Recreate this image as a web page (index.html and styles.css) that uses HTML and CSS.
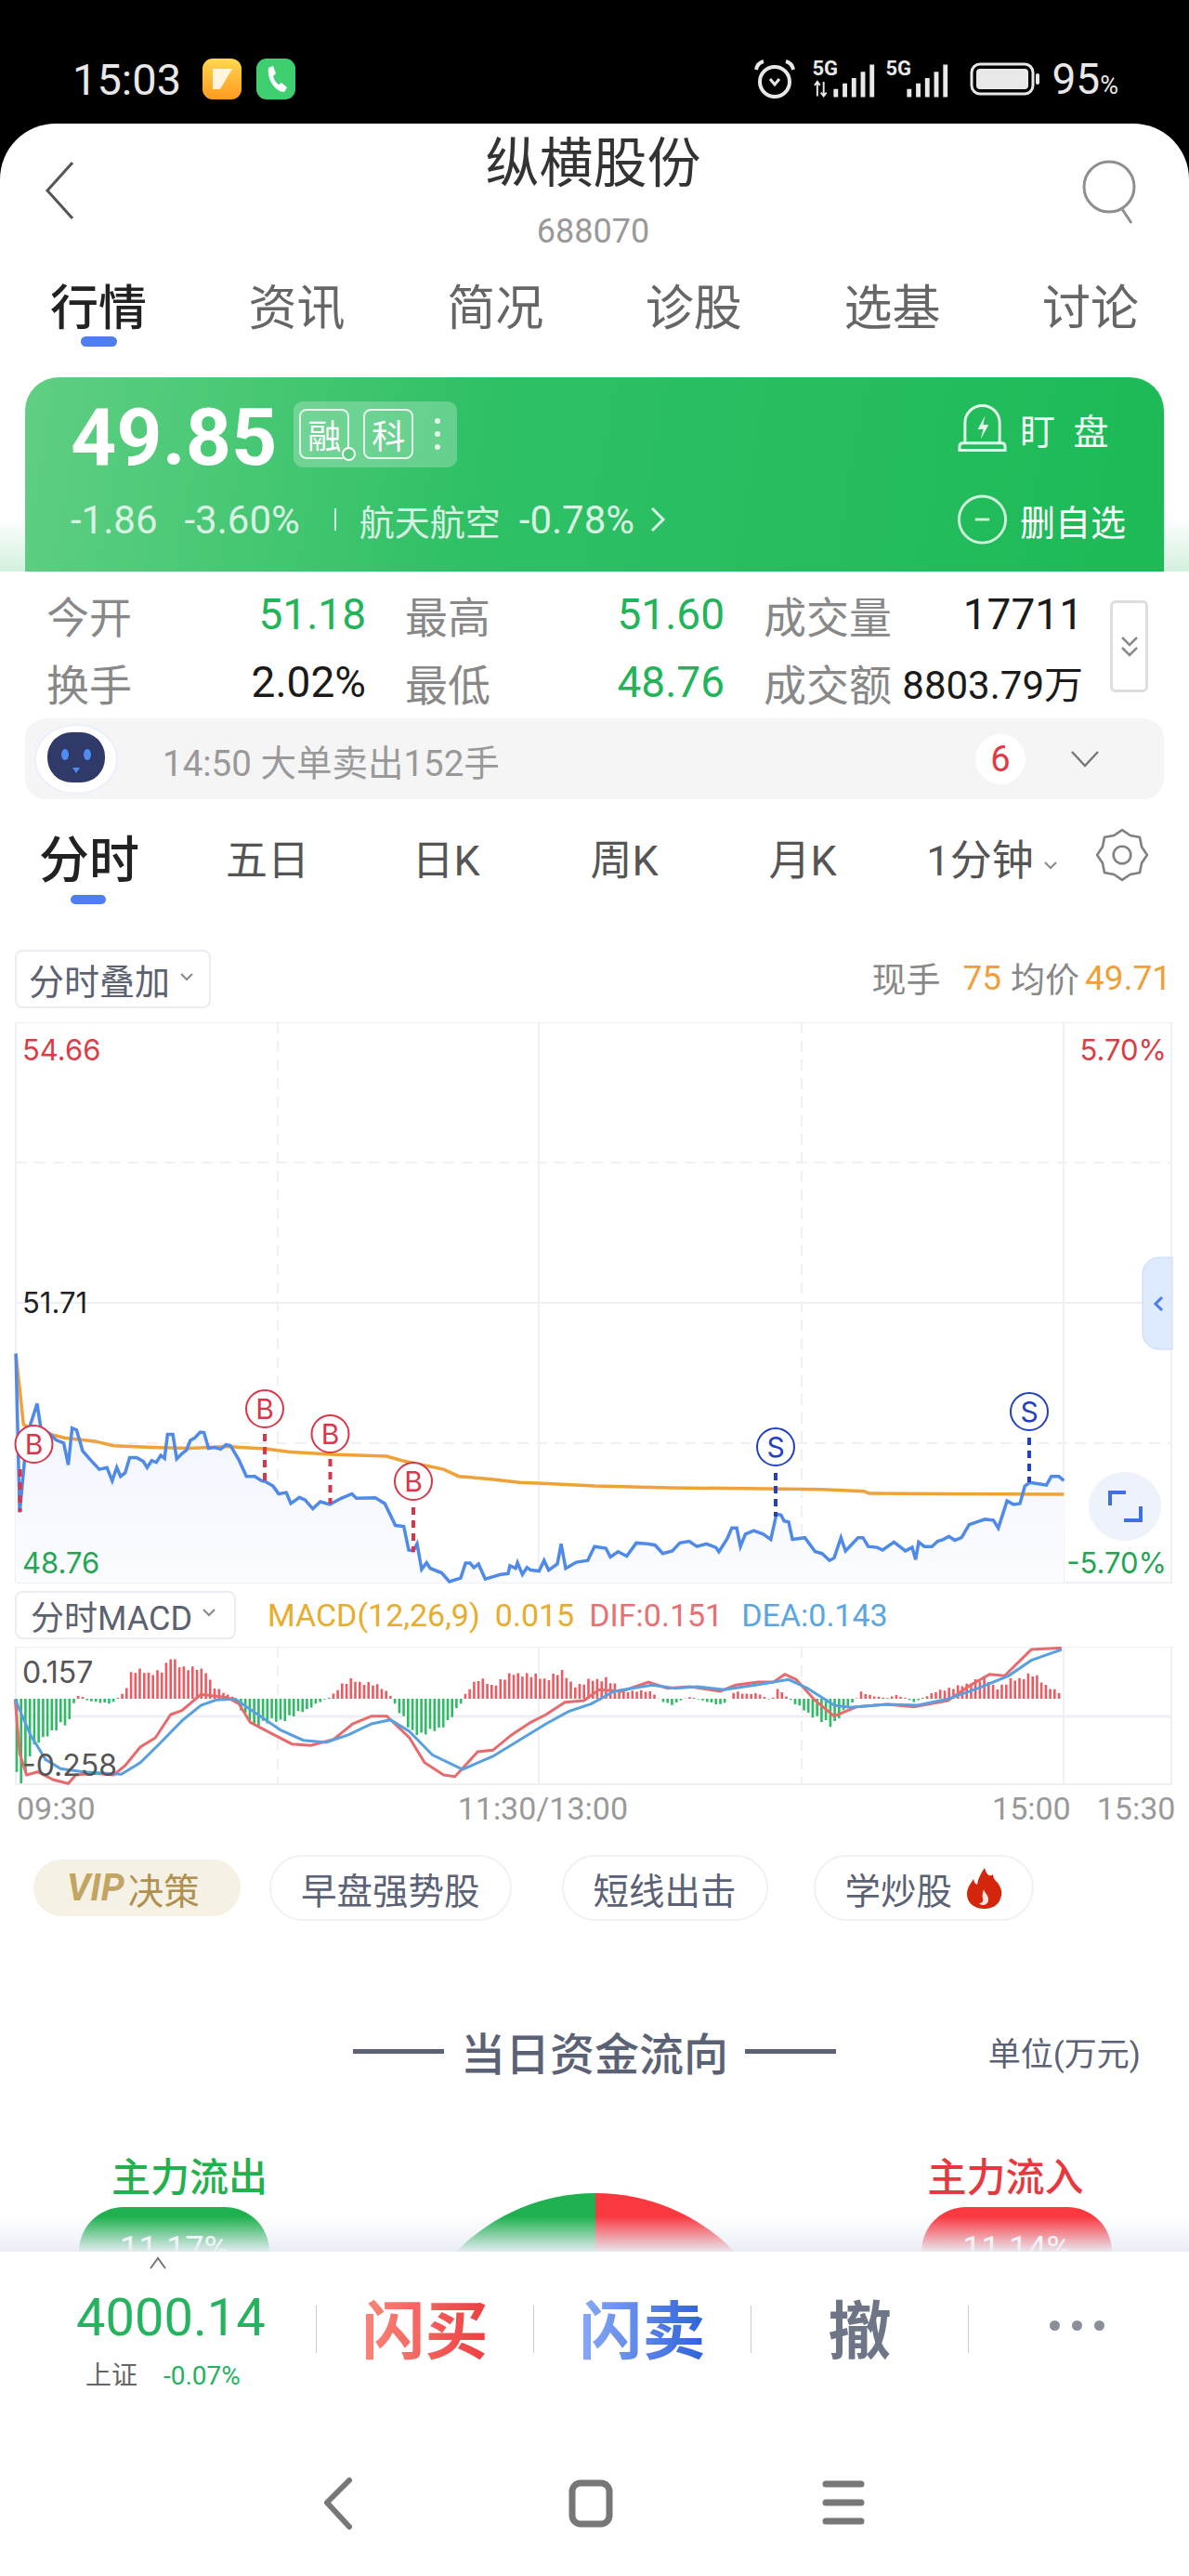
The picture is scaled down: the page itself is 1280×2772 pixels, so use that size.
FILE: index.html
```html
<!DOCTYPE html>
<html lang="zh">
    <head>
        <meta charset="utf-8">
        <title>纵横股份</title>
        <link rel="stylesheet" href="styles.css">
    </head>
    <body>
        <div class="status">
            <span class="clock">15:03</span>
            <svg class="app-icon" viewBox="0 0 42 44"><defs><linearGradient id="noteFill" x1="0" y1="0" x2="0" y2="1"><stop offset="0" stop-color="#ffd84f"/><stop offset="1" stop-color="#ff9a1f"/></linearGradient></defs><rect width="42" height="44" rx="11" fill="url(#noteFill)"/><path d="M11 11h21L19 33h-8z" fill="#fff" opacity=".85"/></svg>
            <svg class="app-icon" viewBox="0 0 42 44"><rect width="42" height="44" rx="11" fill="#3fcf70"/><path d="M13 10l5-2 3 8-3 3c1 4 3 7 6 9l3-2 6 5-3 5c-9 0-19-13-17-26z" fill="#fff"/></svg>
            <div class="status-right">
                <svg class="alarm" viewBox="0 0 46 44" fill="none" stroke="#e8e8e8" stroke-width="4"><circle cx="23" cy="25" r="16"/><path d="M3 12c1-5 4-8 8-9M43 12c-1-5-4-8-8-9"/><path d="M18 22l5 6 5-6" stroke-width="3"/></svg>
                <div class="net">
                    <span class="five-g">5G</span>
                    <svg class="signal" viewBox="0 0 74 42"><path d="M5 24v16M2 28l3-4 3 4M12 40V24M9 36l3 4 3-4" stroke="#e8e8e8" stroke-width="2" fill="none"/><path d="M23 32h5v9h-5zM33 26h5v15h-5zM43 20h5v21h-5zM53 13h5v28h-5zM63 5h5v36h-5z" fill="#e8e8e8"/></svg>
                </div>
                <div class="net">
                    <span class="five-g">5G</span>
                    <svg class="signal" viewBox="0 0 74 42"><path d="M23 32h5v9h-5zM33 26h5v15h-5zM43 20h5v21h-5zM53 13h5v28h-5zM63 5h5v36h-5z" fill="#e8e8e8"/></svg>
                </div>
                <svg class="battery" viewBox="0 0 76 36"><rect x="2" y="2" width="66" height="32" rx="9" fill="none" stroke="#e8e8e8" stroke-width="3"/><rect x="7" y="7" width="56" height="22" rx="4" fill="#e8e8e8"/><rect x="71" y="12" width="4" height="12" rx="2" fill="#e8e8e8"/></svg>
                <span class="level">95<small>%</small></span>
            </div>
        </div>

        <div class="app">
            <div class="main">
                <div class="head">
                    <svg class="back" viewBox="0 0 32 64" fill="none" stroke="#555" stroke-width="3"><path d="M30 2L3 32l27 30"/></svg>
                    <div class="head-title">
                        <div class="name">纵横股份</div>
                        <div class="code">688070</div>
                    </div>
                    <svg class="search" viewBox="0 0 60 70" fill="none" stroke="#8f8f8f" stroke-width="3"><circle cx="30" cy="30" r="27"/><path d="M44 54l10 15"/></svg>
                </div>

                <div class="tabs">
                    <span class="tab active">行情</span>
                    <span class="tab">资讯</span>
                    <span class="tab">简况</span>
                    <span class="tab">诊股</span>
                    <span class="tab">选基</span>
                    <span class="tab">讨论</span>
                </div>

                <div class="quote-wrap">
                    <div class="quote">
                        <div class="quote-left">
                            <div class="quote-top">
                                <span class="price">49.85</span>
                                <div class="tags">
                                    <span class="tag tag-rong">融<i class="tick"></i></span>
                                    <span class="tag">科</span>
                                    <span class="more"><i></i><i></i><i></i></span>
                                </div>
                            </div>
                            <div class="quote-sub">
                                <span>-1.86</span>
                                <span class="pct">-3.60%</span>
                                <i class="sub-line"></i>
                                <span class="sector">航天航空</span>
                                <span class="sector-pct">-0.78%</span>
                                <svg class="sub-arrow" viewBox="0 0 18 30" fill="none" stroke="#d8f3e2" stroke-width="3"><path d="M3 3l12 12L3 27"/></svg>
                            </div>
                        </div>
                        <div class="quote-right">
                            <div class="act act-top">
                                <svg class="act-icon" viewBox="0 0 56 52" fill="none" stroke="#e3f7ea" stroke-width="3"><path d="M9 42V20a19 19 0 0 1 38 0v22"/><path d="M3 50v-4q0-4 4-4h42q4 0 4 4v4z"/><path d="M31 12l-8 15h6l-3 11 9-16h-6z" fill="#e3f7ea" stroke="none"/></svg>
                                <span>盯 盘</span>
                            </div>
                            <div class="act">
                                <svg class="act-icon" viewBox="0 0 56 56" fill="none" stroke="#d2f2de" stroke-width="3"><circle cx="28" cy="28" r="26"/><path d="M20 28h16"/></svg>
                                <span>删自选</span>
                            </div>
                        </div>
                    </div>
                </div>

                <div class="stats-wrap">
                    <div class="stats">
                        <div class="stat"><span class="key">今开</span><span class="down">51.18</span></div>
                        <div class="stat"><span class="key">最高</span><span class="down">51.60</span></div>
                        <div class="stat"><span class="key">成交量</span><span class="plain">17711</span></div>
                        <div class="stat"><span class="key">换手</span><span class="plain">2.02%</span></div>
                        <div class="stat"><span class="key">最低</span><span class="down">48.76</span></div>
                        <div class="stat"><span class="key">成交额</span><span class="plain amount">8803.79万</span></div>
                    </div>
                    <div class="expand">
                        <svg viewBox="0 0 22 26" fill="none" stroke="#8b8b8b" stroke-width="2.5"><path d="M3 3l8 8 8-8M3 14l8 8 8-8"/></svg>
                    </div>
                </div>

                <div class="alert">
                    <svg class="robot" viewBox="0 0 90 76"><ellipse cx="45" cy="38" rx="44" ry="37" fill="#fff" stroke="#eaf1fb" stroke-width="2"/><rect x="14" y="9" width="62" height="54" rx="26" fill="#2f3a69"/><ellipse cx="33" cy="33" rx="4" ry="6" fill="#4f8df5"/><ellipse cx="57" cy="33" rx="4" ry="6" fill="#4f8df5"/><path d="M41 47h8l-4 6z" fill="#4f8df5"/></svg>
                    <span class="alert-text">14:50 大单卖出152手</span>
                    <span class="badge">6</span>
                    <svg class="alert-arrow" viewBox="0 0 32 20" fill="none" stroke="#777" stroke-width="2.5"><path d="M2 2l14 15L30 2"/></svg>
                </div>

                <div class="periods">
                    <span class="period active">分时</span>
                    <span class="period">五日</span>
                    <span class="period">日K</span>
                    <span class="period">周K</span>
                    <span class="period">月K</span>
                    <span class="period period-min">1分钟<svg class="caret-sm" viewBox="0 0 16 10" fill="none" stroke="#888" stroke-width="2"><path d="M2 2l6 6 6-6"/></svg></span>
                    <svg class="gear" viewBox="0 0 56 56" fill="none" stroke="#808080" stroke-width="2.5" stroke-linejoin="round"><polygon points="54,28 48.3,36.4 46.4,46.4 36.4,48.3 28,54 19.6,48.3 9.6,46.4 7.7,36.4 2,28 7.7,19.6 9.6,9.6 19.6,7.7 28,2 36.4,7.7 46.4,9.6 48.3,19.6"/><circle cx="28" cy="28" r="9"/></svg>
                </div>

                <div class="chart-head">
                    <div class="drop">分时叠加<svg class="caret-sm" viewBox="0 0 16 10" fill="none" stroke="#888" stroke-width="2"><path d="M2 2l6 6 6-6"/></svg></div>
                    <div class="now">
                        <span>现手</span><b class="now-hand">75</b><span>均价</span><b>49.71</b>
                    </div>
                </div>

                <svg id="priceChart" class="chart" viewBox="0 1100 1280 606">
                    <g class="grid-line">
                        <path d="M17 1100H1262M17 1402H1262M17 1703H1262M17 1100V1703M580 1100V1703M1145 1100V1703M1261 1100V1703"/>
                        <path class="dash" d="M17 1251H1262M17 1553H1262M299 1100V1703M863 1100V1703"/>
                    </g>
                    <g id="priceLines"></g>
                    <text x="24" y="1141" class="axis up">54.66</text>
                    <text x="24" y="1413" class="axis">51.71</text>
                    <text x="24" y="1693" class="axis down-t">48.76</text>
                    <text x="1256" y="1141" class="axis up end">5.70%</text>
                    <text x="1256" y="1693" class="axis down-t end">-5.70%</text>
                    <g class="buy">
                        <path d="M21.6 1581V1627M285 1543V1593M355.5 1570V1618M445 1622V1670"/>
                        <circle cx="36.5" cy="1554" r="20"/><text x="36.5" y="1565">B</text>
                        <circle cx="285" cy="1516" r="20"/><text x="285" y="1527">B</text>
                        <circle cx="355.5" cy="1543" r="20"/><text x="355.5" y="1554">B</text>
                        <circle cx="445" cy="1594" r="20"/><text x="445" y="1605">B</text>
                    </g>
                    <g class="sell">
                        <path d="M835 1585V1632M1108 1547V1595"/>
                        <circle cx="835" cy="1557" r="20"/><text x="835" y="1568">S</text>
                        <circle cx="1108" cy="1519" r="20"/><text x="1108" y="1530">S</text>
                    </g>
                    <path d="M1262 1353h-14a18 18 0 0 0-18 18v63a18 18 0 0 0 18 18h14z" fill="#deeafd" stroke="#c9daf5" stroke-width="1"/>
                    <path d="M1251 1396l-7 7 7 7" fill="none" stroke="#4a7df0" stroke-width="3"/>
                    <ellipse cx="1211" cy="1621" rx="39" ry="37" fill="#eef2fb"/>
                    <path d="M1195 1620v-14h17M1228 1621v15h-18" fill="none" stroke="#3f6fe0" stroke-width="4"/>
                </svg>

                <div class="macd-head">
                    <div class="drop drop-macd">分时MACD<svg class="caret-sm" viewBox="0 0 16 10" fill="none" stroke="#888" stroke-width="2"><path d="M2 2l6 6 6-6"/></svg></div>
                    <span class="m-gold">MACD(12,26,9)</span>
                    <span class="m-gold">0.015</span>
                    <span class="m-red">DIF:0.151</span>
                    <span class="m-blue">DEA:0.143</span>
                </div>

                <svg id="macdChart" class="macd" viewBox="0 1772 1280 150">
                    <g class="grid-line">
                        <path d="M17 1772H1262M17 1920H1262M17 1772V1920M580 1772V1920M1145 1772V1920M1261 1772V1920"/>
                        <path class="dash" d="M299 1772V1920M863 1772V1920"/>
                        <path class="zero" d="M17 1847H1262"/>
                    </g>
                    <g id="macdBars"></g>
                    <g id="macdLines"></g>
                    <text x="24" y="1811" class="axis macd-axis">0.157</text>
                    <text x="24" y="1911" class="axis macd-axis">-0.258</text>
                </svg>

                <div class="times">
                    <span>09:30</span>
                    <span class="time-mid">11:30/13:00</span>
                    <span class="time-end">15:00</span>
                    <span>15:30</span>
                </div>

                <div class="chips">
                    <span class="chip chip-vip"><b>VIP</b> 决策</span>
                    <span class="chip">早盘强势股</span>
                    <span class="chip">短线出击</span>
                    <span class="chip chip-learn">学炒股
                        <svg class="flame" viewBox="0 0 40 46"><path d="M21 1c2 8 6 10 9 7 0 4 2 6 5 9 5 7 5 12 3 17-2 7-9 11-17 11C10 45 2 39 2 29c0-7 4-11 7-16 1 4 2 5 4 6 1-7 4-12 8-18z" fill="#d4260c"/><path d="M20 24c1 4 5 6 5 11 0 4-3 6-6 6-2 0-3-1-4-2 3 0 5-2 4-5-1-3 0-6 1-10z" fill="#ffe6dc"/></svg>
                    </span>
                </div>

                <div class="money-head">
                    <div class="money-title"><i></i>当日资金流向<i></i></div>
                    <span class="unit">单位(万元)</span>
                </div>

                <div class="flow">
                    <div class="flow-col">
                        <div class="flow-key flow-out">主力流出</div>
                        <div class="pill pill-out">11.17%</div>
                    </div>
                    <div class="gauge"></div>
                    <div class="flow-col">
                        <div class="flow-key flow-in">主力流入</div>
                        <div class="pill pill-in">11.14%</div>
                    </div>
                </div>
                <div class="fade"></div>
            </div>

            <div class="bottom">
                <svg class="index-up" viewBox="0 0 20 16" fill="none" stroke="#777" stroke-width="2"><path d="M2 14l8-11 8 11"/></svg>
                <div class="trade">
                    <div class="index">
                        <div class="index-num">4000.14</div>
                        <div class="index-sub"><span class="index-name">上证</span><span>-0.07%</span></div>
                    </div>
                    <i class="sep"></i>
                    <span class="btn btn-buy">闪买</span>
                    <i class="sep"></i>
                    <span class="btn btn-sell">闪卖</span>
                    <i class="sep"></i>
                    <span class="btn btn-undo">撤</span>
                    <i class="sep"></i>
                    <span class="btn btn-more"><i></i><i></i><i></i></span>
                </div>
                <div class="nav">
                    <svg viewBox="0 0 80 60" fill="none" stroke="#777" stroke-width="6" stroke-linecap="round" stroke-linejoin="round"><path d="M52 5L28 29l24 26"/></svg>
                    <svg viewBox="0 0 80 60" fill="none" stroke="#777" stroke-width="7"><rect x="20" y="8" width="40" height="44" rx="9"/></svg>
                    <svg viewBox="0 0 80 60" fill="none" stroke="#777" stroke-width="7" stroke-linecap="round"><path d="M21 9h38M21 29h38M21 49h38"/></svg>
                </div>
            </div>
        </div>
        <script src="chart.js"></script>
    </body>
</html>
```

FILE: styles.css
```css
*{
    box-sizing: border-box;
}

body{
    margin: 0;
    width: 1280px;
    height: 2772px;
    overflow: hidden;
    background-color: #000;
    font-family: Roboto, "Noto Sans CJK SC", sans-serif;
    color: #222;
}

i{
    font-style: normal;
}

/* status bar */
.status{
    height: 133px;
    padding: 37px 76px 0 78px;
    display: flex;
    align-items: center;
    color: #e8e8e8;
}

.clock{
    font-size: 47px;
    margin-right: 23px;
}

.app-icon{
    width: 42px;
    height: 44px;
    margin-right: 16px;
}

.status-right{
    margin-left: auto;
    display: flex;
    align-items: center;
}

.alarm{
    width: 46px;
    height: 44px;
    margin-right: 18px;
}

.net{
    width: 72px;
    height: 42px;
    margin-right: 7px;
    position: relative;
}

.signal{
    display: block;
    width: 72px;
    height: 42px;
}

.five-g{
    position: absolute;
    left: 0;
    top: -2px;
    font-size: 22px;
    line-height: 24px;
    font-weight: 700;
}

.battery{
    width: 76px;
    height: 36px;
    margin: 0 13px 0 11px;
}

.level{
    font-size: 46px;
}

.level small{
    font-size: 27px;
}

/* white sheet */
.app{
    height: 2639px;
    background-color: #fff;
    border-radius: 60px 60px 0 0;
    display: flex;
    flex-direction: column;
    overflow: hidden;
}

.main{
    flex: 1;
    min-height: 0;
    overflow: hidden;
    position: relative;
}

.head{
    height: 152px;
    padding: 0 56px 0 48px;
    display: grid;
    grid-template-columns: 1fr auto 1fr;
    align-items: center;
}

.back{
    width: 32px;
    height: 64px;
    margin-top: -8px;
}

.search{
    width: 60px;
    height: 70px;
    margin-top: -6px;
    justify-self: end;
}

.head-title{
    text-align: center;
    margin: -13px 0 0 5px;
}

.name{
    font-size: 58px;
    line-height: 82px;
    color: #333;
}

.code{
    font-size: 36px;
    line-height: 44px;
    color: #999;
    margin-top: 10px;
}

.tabs{
    height: 90px;
    margin-bottom: 31px;
    padding: 3px 54px 0;
    display: flex;
    justify-content: space-between;
    font-size: 52px;
    line-height: 90px;
    color: #666;
}

.tab{
    position: relative;
}

.tab.active{
    color: #222;
    font-weight: 500;
}

.tab.active::after{
    content: "";
    position: absolute;
    left: 33px;
    top: 74px;
    width: 39px;
    height: 11px;
    border-radius: 6px;
    background-color: #4f7ef0;
}

/* green quote card */
.quote-wrap{
    padding: 0 27px;
    background: linear-gradient(#fff 72%, #d3f0dd 100%);
}

.quote{
    height: 209px;
    padding: 14px 41px 0 49px;
    display: flex;
    justify-content: space-between;
    border-radius: 36px 36px 0 0;
    background: linear-gradient(100deg, #60cf83 0%, #2fc066 40%, #1dba57 100%);
    color: #fff;
}

.quote-top{
    height: 100px;
    display: flex;
    align-items: center;
}

.price{
    font-size: 86px;
    font-weight: 700;
    margin-right: 18px;
}

.tags{
    width: 176px;
    height: 71px;
    margin-top: -6px;
    padding-left: 6px;
    display: flex;
    align-items: center;
    gap: 15px;
    border-radius: 10px;
    background-color: rgba(255,255,255,.25);
}

.tag{
    width: 54px;
    height: 54px;
    display: flex;
    align-items: center;
    justify-content: center;
    border: 2px solid rgba(255,255,255,.8);
    border-radius: 8px;
    font-size: 36px;
    position: relative;
}

.tick{
    position: absolute;
    right: -9px;
    bottom: -4px;
    width: 15px;
    height: 15px;
    border-radius: 50%;
    border: 2px solid #fff;
    background-color: #5fcc82;
}

.more{
    margin-left: 8px;
    display: flex;
    flex-direction: column;
    gap: 8px;
}

.more i{
    width: 6px;
    height: 6px;
    border-radius: 50%;
    background-color: #fff;
    opacity: .8;
}

.quote-sub{
    height: 60px;
    margin-top: 9px;
    display: flex;
    align-items: center;
    font-size: 42px;
    color: #d8f3e2;
}

.pct{
    margin-left: 29px;
}

.sub-line{
    width: 2px;
    height: 24px;
    margin: 0 25px 0 37px;
    background-color: #d8f3e2;
}

.sector{
    font-size: 38px;
}

.sector-pct{
    margin-left: 20px;
}

.sub-arrow{
    width: 18px;
    height: 30px;
    margin-left: 16px;
}

.quote-right{
    display: flex;
    flex-direction: column;
    font-size: 38px;
}

.act{
    height: 60px;
    margin-top: 27px;
    display: flex;
    align-items: center;
    gap: 13px;
}

.act-top{
    height: 82px;
    margin-top: 0;
    color: #f2fff6;
    word-spacing: 10px;
}

.act-icon{
    width: 55px;
    height: 54px;
}

/* stats */
.stats-wrap{
    height: 158px;
    padding: 9px 0 0 50px;
    display: flex;
}

.stats{
    width: 1116px;
    display: grid;
    grid-template-columns: 344px 344px 344px;
    grid-auto-rows: 73px;
    column-gap: 42px;
    font-size: 46px;
}

.stat{
    display: flex;
    align-items: center;
    justify-content: space-between;
}

.key{
    color: #888;
    font-size: 46px;
}

.down{
    color: #22b45a;
}

.plain{
    color: #1a1a1a;
    font-size: 46px;
}

.plain.amount{
    font-size: 42px;
}

.expand{
    width: 41px;
    height: 99px;
    margin: 22px 0 0 29px;
    display: flex;
    align-items: center;
    justify-content: center;
    border: 3px solid #dedede;
    border-radius: 6px;
}

.expand svg{
    width: 22px;
    height: 26px;
}

/* alert strip */
.alert{
    height: 87px;
    margin: 0 27px;
    padding: 0 69px 0 9px;
    display: flex;
    align-items: center;
    border-radius: 22px;
    background-color: #f5f5f5;
}

.robot{
    width: 92px;
    height: 76px;
    margin-right: 47px;
}

.alert-text{
    font-size: 38.5px;
    color: #999;
    padding-top: 2px;
}

.badge{
    width: 54px;
    height: 54px;
    margin-left: auto;
    display: flex;
    align-items: center;
    justify-content: center;
    border-radius: 50%;
    background-color: #fff;
    color: #e23a45;
    font-size: 38px;
}

.alert-arrow{
    width: 32px;
    height: 20px;
    margin-left: 48px;
}

/* period tabs */
.periods{
    height: 124px;
    margin-bottom: 38px;
    display: grid;
    grid-template-columns: repeat(6, 192px) 1fr;
    align-items: center;
    justify-items: center;
    font-size: 45px;
    color: #555;
}

.period{
    position: relative;
    white-space: nowrap;
}

.period.active{
    font-size: 54px;
    font-weight: 500;
    color: #222;
    margin-top: -2px;
}

.period.active::after{
    content: "";
    position: absolute;
    left: 34px;
    top: 81px;
    width: 38px;
    height: 10px;
    border-radius: 5px;
    background-color: #4f7ef0;
}

.period-min{
    margin-left: 24px;
}

.caret-sm{
    width: 16px;
    height: 10px;
    margin: 0 0 6px 10px;
}

.gear{
    width: 58px;
    height: 58px;
    margin: -4px 0 0 -16px;
}

/* chart */
.chart-head{
    height: 63px;
    margin: 0 19px 15px 16px;
    display: flex;
    align-items: center;
    justify-content: space-between;
}

.drop{
    height: 63px;
    padding: 0 16px 0 13px;
    display: flex;
    align-items: center;
    border: 2px solid #ebedf2;
    border-radius: 8px;
    font-size: 38px;
    color: #5c6270;
}

.now{
    display: flex;
    align-items: center;
    font-size: 37px;
    color: #888;
    margin-top: -3px;
}

.now b{
    font-weight: 400;
    color: #f0a038;
    margin-left: 6px;
}

.now .now-hand{
    margin: 0 10px 0 24px;
}

.chart{
    display: block;
    width: 1280px;
    height: 606px;
}

.grid-line{
    fill: none;
    stroke: #eef0f5;
    stroke-width: 2;
}

.dash{
    stroke-dasharray: 12 8;
}

.zero{
    stroke-width: 3;
}

.axis{
    font-family: Inter, sans-serif;
    font-size: 31px;
    fill: #222;
}

.axis.up{
    fill: #dc3c46;
}

.axis.down-t{
    fill: #22a654;
}

.axis.end{
    text-anchor: end;
}

.buy,
.sell{
    font-family: Inter, sans-serif;
    font-size: 30px;
    text-anchor: middle;
}

.buy path,
.sell path{
    stroke-width: 4;
    stroke-dasharray: 8 6;
    fill: none;
}

.buy circle,
.sell circle{
    fill: #fff;
    stroke-width: 2;
}

.buy path,
.buy circle{
    stroke: #d9364a;
}

.buy text{
    fill: #d9364a;
}

.sell path,
.sell circle{
    stroke: #2340c0;
}

.sell text{
    fill: #2340c0;
}

.macd-head{
    height: 52px;
    margin: 6px 0 8px 16px;
    display: flex;
    align-items: center;
    font-size: 34px;
}

.drop-macd{
    height: 52px;
    width: 238px;
    margin-right: 34px;
    font-size: 36px;
    padding: 0 8px 0 15px;
    white-space: nowrap;
}

.m-gold{
    color: #e8ad2c;
    margin-right: 16px;
}

.m-red{
    color: #e87073;
    margin-right: 20px;
}

.m-blue{
    color: #5aa6e0;
}

.macd{
    display: block;
    width: 1280px;
    height: 150px;
}

.macd-axis{
    font-size: 32px;
    fill: #555;
}

.times{
    height: 47px;
    padding: 0 18px;
    display: flex;
    align-items: center;
    font-size: 34px;
    color: #999;
}

.time-mid{
    margin-left: 390px;
}

.time-end{
    margin-left: 392px;
}

.times span:last-child{
    margin-left: 28px;
}

.chips{
    height: 71px;
    margin-top: 27px;
    padding-left: 36px;
    display: flex;
    align-items: center;
    font-size: 38.5px;
    color: #5b6275;
}

.chip{
    height: 71px;
    margin-left: 54px;
    padding: 0 32px;
    display: flex;
    align-items: center;
    border: 2px solid #eff1f7;
    border-radius: 36px;
    white-space: nowrap;
}

.chip-vip{
    width: 223px;
    height: 61px;
    margin: 0 -23px 0 0;
    padding: 0 0 0 36px;
    border: none;
    background-color: #f6f1e5;
    color: #b0904f;
}

.chip-vip b{
    font-style: italic;
    font-size: 40px;
    margin-right: 4px;
    color: #c2a562;
}

.chip-learn{
    margin-left: 49px;
}

.flame{
    width: 40px;
    height: 46px;
    margin-left: 14px;
}

/* money flow, cut off by the bottom bar */
.money-head{
    height: 64px;
    margin-top: 105px;
    display: grid;
    grid-template-columns: 1fr auto 1fr;
    align-items: center;
}

.money-title{
    grid-column: 2;
    display: flex;
    align-items: center;
    gap: 18px;
    font-size: 48px;
    font-weight: 500;
    color: #5b6275;
}

.money-title i{
    width: 98px;
    height: 5px;
    background-color: #5b6275;
}

.unit{
    justify-self: end;
    margin-right: 52px;
    font-size: 35px;
    color: #5b6275;
}

.flow{
    margin-top: 84px;
    padding: 0 83px 0 85px;
    display: flex;
    justify-content: space-between;
}

.flow-col{
    width: 205px;
}

.flow-key{
    height: 48px;
    line-height: 48px;
    margin-bottom: 7px;
    text-align: center;
    font-size: 42px;
    font-weight: 500;
    white-space: nowrap;
}

.flow-out{
    color: #22b14c;
    padding-left: 27px;
    margin-right: -6px;
}

.flow-in{
    color: #e8383f;
    margin-left: -24px;
}

.pill{
    height: 100px;
    padding-top: 24px;
    border-radius: 48px 48px 0 0;
    text-align: center;
    font-size: 36px;
    color: #fff;
}

.pill-out{
    background-color: #1fb14f;
}

.pill-in{
    background-color: #fa3840;
}

.gauge{
    width: 420px;
    height: 210px;
    margin-top: 40px;
    border-radius: 210px 210px 0 0;
    background: linear-gradient(to right, #1fb14f 50%, #fa3840 50%);
}

.fade{
    position: absolute;
    left: 0;
    right: 0;
    bottom: 0;
    height: 38px;
    background: linear-gradient(rgba(233,237,245,0), rgba(233,237,245,.97));
}

/* bottom bar */
.bottom{
    height: 349px;
    background-color: #fff;
    position: relative;
}

.index-up{
    display: block;
    width: 20px;
    height: 16px;
    margin-left: 160px;
    position: absolute;
    top: 4px;
}

.trade{
    height: 122px;
    padding-top: 26px;
    box-sizing: content-box;
    display: flex;
    align-items: center;
}

.index{
    width: 340px;
    padding-left: 82px;
}

.index-num{
    font-size: 56px;
    line-height: 94px;
    color: #26b35f;
}

.index-sub{
    display: flex;
    font-size: 28px;
    line-height: 32px;
    color: #26b35f;
    padding-left: 10px;
}

.index-name{
    color: #666;
    margin-right: 28px;
}

.sep{
    width: 1px;
    height: 51px;
    margin-bottom: 8px;
    background-color: #ccc;
}

.btn{
    width: 233px;
    text-align: center;
    font-size: 68px;
    font-weight: 700;
    line-height: 122px;
}

.btn-buy,
.btn-sell{
    background-clip: text;
    -webkit-background-clip: text;
    color: transparent;
}

.btn-buy{
    background-image: linear-gradient(to right, #fff 46px, #f8887c 46px, #ee3a3e 190px);
}

.btn-sell{
    background-image: linear-gradient(to right, #fff 46px, #8cabf6 46px, #2a5fd8 190px);
}

.btn-undo{
    color: #6e7587;
}

.btn-more{
    display: flex;
    justify-content: center;
    gap: 13px;
    margin-bottom: 16px;
    align-items: center;
    height: 122px;
}

.btn-more i{
    width: 11px;
    height: 11px;
    border-radius: 50%;
    background-color: #8a8f99;
}

.nav{
    position: absolute;
    left: 0;
    right: 8px;
    top: 241px;
    display: flex;
    justify-content: center;
    gap: 192px;
}

.nav svg{
    width: 80px;
    height: 60px;
}
```

FILE: chart.js
```js
// points below were read off the screenshot in crop units, converted on draw
const NS = "http://www.w3.org/2000/svg";

const priceLeft = [[42,968],[52,1330],[66,1200],[80,1130],[98,1082],[108,1140],[130,1150],[148,1165],[168,1172],[180,1222],[190,1138],[202,1142],[218,1190],[240,1212],[262,1232],[282,1228],[296,1258],[308,1228],[318,1248],[330,1240],[342,1205],[360,1205],[378,1214],[388,1228],[400,1212],[412,1216],[424,1200],[434,1207],[442,1152],[456,1152],[466,1208],[480,1196],[492,1188],[502,1166],[514,1160],[528,1147],[538,1148],[550,1184],[566,1182],[582,1186],[596,1176],[608,1178],[630,1210],[650,1248],[672,1248],[690,1258],[700,1260],[720,1270],[735,1288],[755,1285],[767,1310],[790,1296],[805,1302],[825,1322],[845,1306],[870,1312],[900,1298],[928,1288],[940,1298],[990,1297],[1015,1310],[1043,1360],[1065,1362],[1078,1416],[1090,1418],[1100,1402],[1112,1460],[1125,1445],[1135,1458],[1165,1468],[1185,1488],[1215,1480],[1228,1446],[1240,1446],[1250,1456],[1262,1448],[1280,1482],[1320,1472],[1340,1470],[1345,1452],[1360,1458],[1365,1445],[1378,1472],[1390,1456],[1400,1462],[1422,1464],[1435,1440],[1447,1462],[1470,1448],[1480,1402],[1492,1458],[1520,1444],[1550,1440],[1568,1408]];
const priceRight = [[30,1412],[42,1432],[62,1420],[85,1430],[110,1400],[140,1402],[160,1405],[180,1424],[205,1418],[225,1400],[250,1396],[270,1408],[295,1402],[320,1410],[328,1420],[350,1390],[362,1366],[375,1366],[385,1408],[398,1380],[420,1372],[445,1380],[465,1392],[480,1334],[492,1336],[500,1350],[512,1352],[522,1392],[555,1388],[582,1420],[600,1424],[620,1440],[632,1434],[650,1388],[662,1418],[695,1388],[708,1388],[722,1408],[745,1410],[760,1416],[790,1398],[820,1418],[838,1410],[847,1438],[855,1398],[870,1408],[890,1408],[905,1396],[920,1392],[935,1385],[950,1394],[968,1388],[988,1358],[1030,1346],[1052,1348],[1065,1366],[1088,1304],[1105,1312],[1122,1310],[1135,1270],[1148,1262],[1192,1268],[1205,1248],[1225,1248],[1238,1258]];
const avgLeft = [[42,968],[62,1130],[100,1145],[170,1160],[250,1168],[300,1178],[400,1182],[500,1184],[600,1180],[700,1185],[760,1192],[870,1198],[1020,1202],[1060,1212],[1170,1232],[1210,1248],[1290,1254],[1370,1262],[1430,1264],[1568,1270]];
const avgRight = [[200,1274],[600,1278],[710,1282],[725,1287],[1238,1289]];

const dif = [[20,326],[26,500],[35,570],[50,560],[70,585],[90,598],[100,570],[125,565],[150,570],[165,540],[185,480],[205,450],[225,375],[240,362],[265,310],[300,320],[315,340],[330,400],[365,445],[385,470],[410,475],[440,455],[465,405],[490,380],[510,380],[540,450],[560,530],[585,570],[600,575],[630,495],[650,490],[675,440],[700,400],[720,375],[745,335],[770,330],[790,295],[820,300],[855,270],[880,290],[910,285],[950,300],[970,280],[1000,270],[1020,270],[1035,245],[1050,262],[1075,330],[1100,380],[1130,350],[1170,342],[1205,350],[1250,330],[1280,280],[1305,245],[1325,250],[1360,165],[1400,160]];
const dea = [[20,326],[40,440],[60,520],[80,550],[110,560],[160,568],[185,530],[210,470],[240,395],[265,345],[285,328],[310,325],[340,375],[370,425],[400,458],[430,465],[460,440],[490,405],[515,392],[540,430],[570,505],[610,552],[650,510],[680,465],[720,405],[750,365],[780,340],[810,300],[860,280],[890,290],[920,285],[955,295],[1000,278],[1040,262],[1065,290],[1100,345],[1120,352],[1170,342],[1210,345],[1250,325],[1290,290],[1330,250],[1360,200],[1400,165]];

// macd histogram outline, bars are interpolated between these
const barShape = [[20,326],[22,560],[30,600],[40,500],[50,465],[60,440],[70,430],[80,410],[90,405],[97,340],[100,316],[108,316],[115,330],[130,335],[148,340],[155,322],[165,300],[172,245],[180,235],[200,240],[215,235],[227,185],[240,225],[255,230],[270,225],[280,285],[295,305],[310,320],[320,370],[335,405],[350,400],[365,395],[380,385],[395,370],[410,350],[425,330],[435,320],[450,280],[465,265],[480,272],[495,280],[510,300],[518,322],[522,350],[540,420],[555,440],[570,430],[590,400],[605,350],[610,330],[615,300],[630,262],[650,280],[680,240],[700,250],[720,260],[740,238],[760,285],[785,260],[800,260],[820,300],[860,300],[868,322],[875,335],[885,345],[900,326],[910,318],[925,328],[950,345],[960,330],[968,300],[985,310],[1000,305],[1010,322],[1018,330],[1025,290],[1040,322],[1048,340],[1070,375],[1095,412],[1110,370],[1128,330],[1135,300],[1150,315],[1170,322],[1180,312],[1195,322],[1205,335],[1220,318],[1240,295],[1260,290],[1280,270],[1300,260],[1315,290],[1335,265],[1360,245],[1380,280],[1400,310]];

function toPrice(pt, offset){
    return (offset + pt[0] / 2.45).toFixed(1) + "," + (1000 + pt[1] / 2.12).toFixed(1);
}

function toMacd(pt){
    return (pt[0] / 1.225).toFixed(1) + "," + (1720 + pt[1] / 3).toFixed(1);
}

function addShape(parent, tag, attrs){
    let el = document.createElementNS(NS, tag);
    for(let key in attrs){
        el.setAttribute(key, attrs[key]);
    }
    parent.appendChild(el);
}

function drawPrice(){
    let group = document.getElementById("priceLines");
    let price = priceLeft.map(p => toPrice(p, 0)).concat(priceRight.map(p => toPrice(p, 640)));
    let avg = avgLeft.map(p => toPrice(p, 0)).concat(avgRight.map(p => toPrice(p, 640)));

    addShape(group, "linearGradient", {id: "priceFill", x1: 0, y1: 0, x2: 0, y2: 1});
    let grad = group.lastChild;
    addShape(grad, "stop", {offset: 0, "stop-color": "#eef3fd"});
    addShape(grad, "stop", {offset: 1, "stop-color": "#fbfcff"});

    addShape(group, "polygon", {points: "17,1703 " + price.join(" ") + " 1145,1703", fill: "url(#priceFill)"});
    addShape(group, "polyline", {points: avg.join(" "), fill: "none", stroke: "#f0a238", "stroke-width": 3.5});
    addShape(group, "polyline", {points: price.join(" "), fill: "none", stroke: "#4f8ae8", "stroke-width": 3.5});
}

function shapeAt(x){
    for(let i = 1; i < barShape.length; i++){
        if(x <= barShape[i][0]){
            let a = barShape[i - 1], b = barShape[i];
            return a[1] + (b[1] - a[1]) * (x - a[0]) / (b[0] - a[0]);
        }
    }
    return 324;
}

function drawMacd(){
    let bars = document.getElementById("macdBars");
    let red = "", green = "";
    for(let x = 22, n = 0; x <= 1402; x += 5.8, n++){
        let top = shapeAt(x);
        let jag = [0, 8, -6, 4, -10, 3][n % 6] * Math.min(1, Math.abs(top - 324) / 60);
        top = 1720 + (top + jag) / 3;
        let seg = "M" + (x / 1.225).toFixed(1) + " 1828V" + top.toFixed(1);
        if(top < 1828){
            red += seg;
        }
        else{
            green += seg;
        }
    }
    addShape(bars, "path", {d: red, stroke: "#ee5a62", "stroke-width": 2.6, fill: "none"});
    addShape(bars, "path", {d: green, stroke: "#2dbb63", "stroke-width": 2.6, fill: "none"});

    let lines = document.getElementById("macdLines");
    addShape(lines, "polyline", {points: dif.map(toMacd).join(" "), fill: "none", stroke: "#e86a6c", "stroke-width": 3});
    addShape(lines, "polyline", {points: dea.map(toMacd).join(" "), fill: "none", stroke: "#58a0e0", "stroke-width": 3});
}

drawPrice();
drawMacd();
```
